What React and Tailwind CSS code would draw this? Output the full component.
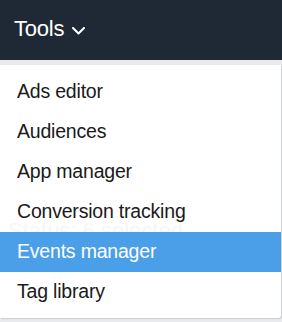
const items = ['Ads editor', 'Audiences', 'App manager', 'Conversion tracking', 'Events manager', 'Tag library'];

export default function App() {
  return (
    <div className="w-[282px] h-[322px] bg-[#e8eaed] overflow-hidden" style={{ fontFamily: '"Liberation Sans", Arial, sans-serif' }}>
      {/* Top bar */}
      <div className="h-[60px] bg-[#1f2935] flex items-center pl-[14px] pb-[4px]">
        <span className="text-white text-[22px] tracking-[-0.2px]">Tools</span>
        <svg className="ml-[8px] mt-[5px]" width="13" height="8" viewBox="0 0 13 8" fill="none">
          <polyline points="1,1 6.5,6.5 12,1" stroke="white" strokeWidth="2" strokeLinecap="round" strokeLinejoin="round" />
        </svg>
      </div>

      {/* Dropdown */}
      <div className="mt-[5px] mr-[1px] h-[253px] bg-white rounded-br-[3px] shadow-[1px_1px_1px_rgba(0,0,0,0.12)] pt-[7px] relative">
        <div className="absolute left-[8px] top-[157px] h-[10px] overflow-hidden">
          <div className="text-[22px] leading-[26px] text-[#f5f6f7] -mt-[4px] whitespace-nowrap">Status: 6 selected</div>
        </div>
        {items.map((item) => (
          <div
            key={item}
            className={`relative h-[40px] flex items-center pl-[17px] text-[19.5px] tracking-[-0.2px] ${item === 'Events manager' ? 'bg-[#4a9fe8] text-white' : 'text-[#1a1a1a]'}`}
          >
            {item}
          </div>
        ))}
      </div>
    </div>
  );
}
